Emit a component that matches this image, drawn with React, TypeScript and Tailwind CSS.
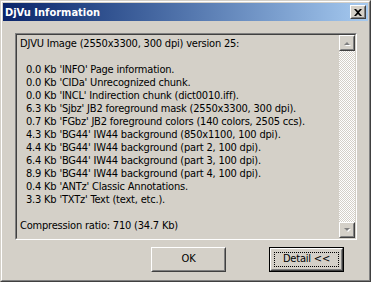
const lines = [
  "0.0 Kb 'INFO' Page information.",
  "0.0 Kb 'CIDa' Unrecognized chunk.",
  "0.0 Kb 'INCL' Indirection chunk (dict0010.iff).",
  "6.3 Kb 'Sjbz' JB2 foreground mask (2550x3300, 300 dpi).",
  "0.7 Kb 'FGbz' JB2 foreground colors (140 colors, 2505 ccs).",
  "4.3 Kb 'BG44' IW44 background (850x1100, 100 dpi).",
  "4.4 Kb 'BG44' IW44 background (part 2, 100 dpi).",
  "6.4 Kb 'BG44' IW44 background (part 3, 100 dpi).",
  "8.9 Kb 'BG44' IW44 background (part 4, 100 dpi).",
  "0.4 Kb 'ANTz' Classic Annotations.",
  "3.3 Kb 'TXTz' Text (text, etc.).",
];

function Arrow({ up }: { up?: boolean }) {
  return (
    <div className="w-[16px] h-[16px] border border-t-white border-l-white border-r-[#404040] border-b-[#404040] bg-[#d4d0c8]">
      <div className="w-full h-full border border-t-[#d4d0c8] border-l-[#d4d0c8] border-r-[#808080] border-b-[#808080] flex items-center justify-center">
        <svg width="8" height="5" viewBox="0 0 8 5">
          {up ? (
            <>
              <path d="M2 5 L5 2 L8 5 Z" fill="#ffffff" />
              <path d="M1 4 L4 1 L7 4 Z" fill="#808080" />
            </>
          ) : (
            <>
              <path d="M2 1 L8 1 L5 4 Z" fill="#ffffff" />
              <path d="M1 0 L7 0 L4 3 Z" fill="#808080" />
            </>
          )}
        </svg>
      </div>
    </div>
  );
}

function Button({ label, isDefault }: { label: string; isDefault?: boolean }) {
  const inner = (
    <div className="w-full h-full border border-t-white border-l-white border-r-[#404040] border-b-[#404040]">
      <div className="w-full h-full border border-t-[#d4d0c8] border-l-[#d4d0c8] border-r-[#808080] border-b-[#808080] flex items-center justify-center p-[2px]">
        {isDefault ? (
          <div className="w-full h-full border border-dotted border-black flex items-center justify-center">
            {label}
          </div>
        ) : (
          label
        )}
      </div>
    </div>
  );
  return isDefault ? (
    <div className="w-[75px] h-[25px] border border-black">{inner}</div>
  ) : (
    <div className="w-[75px] h-[25px]">{inner}</div>
  );
}

export default function App() {
  return (
    <div
      className="w-[371px] h-[282px] bg-[#d4d0c8] border border-t-[#d4d0c8] border-l-[#d4d0c8] border-r-[#404040] border-b-[#404040] text-[11px] text-black tracking-[-0.2px]"
      style={{ fontFamily: '"DejaVu Sans Condensed", "DejaVu Sans", sans-serif' }}
    >
      <div className="w-full h-full border border-t-white border-l-white border-r-[#808080] border-b-[#808080] p-px flex flex-col">
        <div className="h-[18px] bg-gradient-to-r from-[#0a246a] to-[#a6caf0] flex items-center justify-between pl-[2px] pr-[2px]">
          <span className="text-white font-bold text-[11px] leading-none tracking-normal">DjVu Information</span>
          <div className="w-[16px] h-[14px] border border-t-white border-l-white border-r-[#404040] border-b-[#404040] bg-[#d4d0c8]">
            <div className="w-full h-full border border-t-[#d4d0c8] border-l-[#d4d0c8] border-r-[#808080] border-b-[#808080] flex items-center justify-center">
              <svg width="8" height="7" viewBox="0 0 8 7">
                <path d="M0 0 L2 0 L4 2 L6 0 L8 0 L5 3.5 L8 7 L6 7 L4 5 L2 7 L0 7 L3 3.5 Z" fill="#000" />
              </svg>
            </div>
          </div>
        </div>

        <div className="ml-[12px] mt-[12px] w-[342px] h-[207px] border border-t-[#808080] border-l-[#808080] border-r-white border-b-white">
          <div className="w-full h-full border border-t-[#404040] border-l-[#404040] border-r-[#d4d0c8] border-b-[#d4d0c8] flex">
            <div className="flex-1 pt-[2px] pl-[3px] leading-[13px] whitespace-pre">
              <div>DJVU Image (2550x3300, 300 dpi) version 25:</div>
              <div>&nbsp;</div>
              {lines.map((l) => (
                <div key={l} className="pl-[6px]">
                  {l}
                </div>
              ))}
              <div>&nbsp;</div>
              <div>Compression ratio: 710 (34.7 Kb)</div>
            </div>
            <div className="w-[16px] flex flex-col bg-[repeating-conic-gradient(#ffffff_0_25%,#d4d0c8_0_50%)] bg-[length:2px_2px]">
              <Arrow up />
              <div className="flex-1" />
              <Arrow />
            </div>
          </div>
        </div>

        <div className="flex justify-end gap-[43px] pr-[24px] mt-[7px]">
          <Button label="OK" />
          <Button label="Detail <<" isDefault />
        </div>
      </div>
    </div>
  );
}
